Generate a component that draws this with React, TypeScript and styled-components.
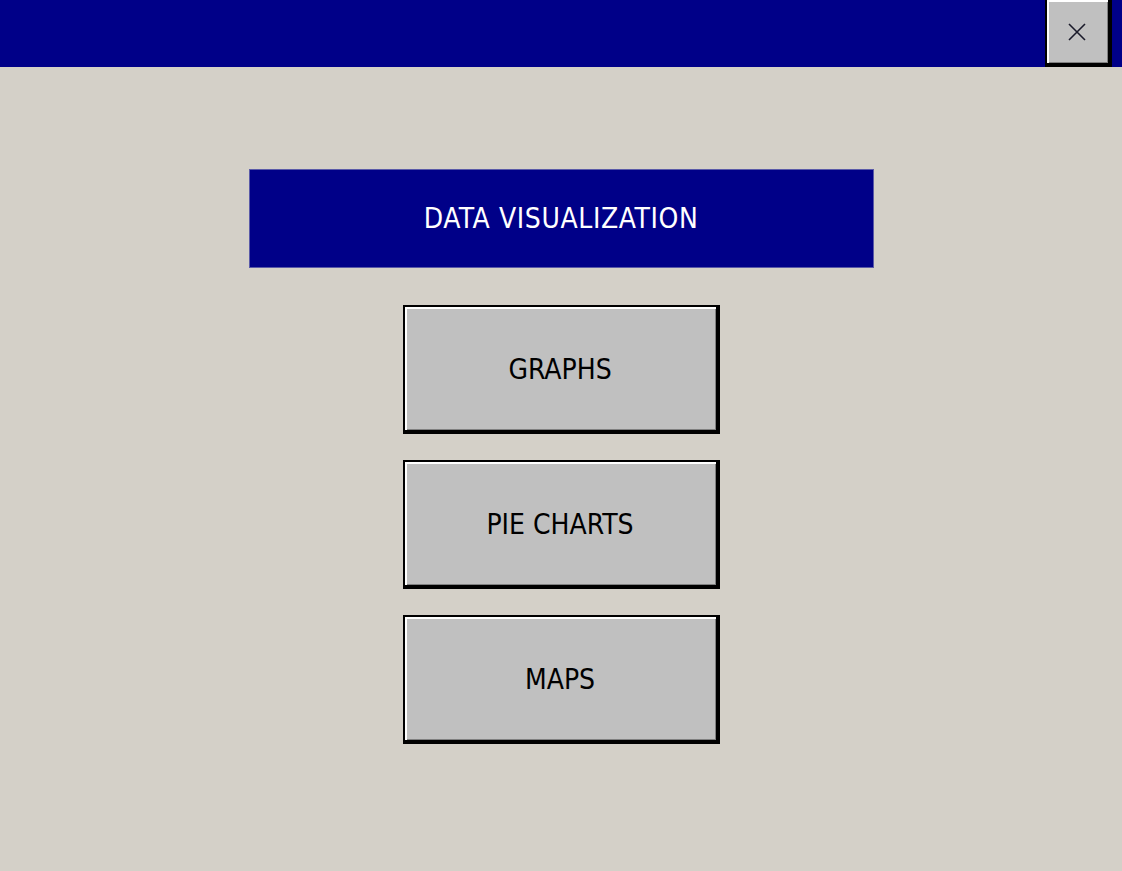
import React from "react";
import styled, { createGlobalStyle } from "styled-components";

const GlobalStyle = createGlobalStyle`
  html, body {
    margin: 0;
    padding: 0;
    background: #d4d0c8;
  }
  body {
    font-family: "DejaVu Sans Condensed", "DejaVu Sans", sans-serif;
    font-stretch: condensed;
  }
`;

const Screen = styled.div`
  width: 1122px;
  height: 871px;
  background: #d4d0c8;
  display: flex;
  flex-direction: column;
  overflow: hidden;
`;

const TitleBar = styled.div`
  height: 67px;
  background: #000088;
  display: flex;
  justify-content: flex-end;
  padding-right: 10px;
  flex-shrink: 0;
`;

const bevel = `
  background: #c0c0c0;
  border-style: solid;
  border-color: #000;
  border-width: 2px 4px 4px 2px;
  box-shadow: inset 2px 2px 0 #ffffff, inset -1px -1px 0 #808080;
  box-sizing: border-box;
`;

const CloseButton = styled.button`
  ${bevel}
  width: 67px;
  height: 67px;
  border-top-width: 0;
  padding: 0 2px 0 0;
  display: flex;
  align-items: center;
  justify-content: center;
  cursor: pointer;
`;

const Content = styled.main`
  display: flex;
  flex-direction: column;
  align-items: center;
  padding-top: 102px;
`;

const Banner = styled.div`
  width: 625px;
  height: 99px;
  box-sizing: border-box;
  background: #000088;
  border: 1px solid #5a5aa8;
  color: #ffffff;
  font-size: 28px;
  letter-spacing: 0.6px;
  display: flex;
  align-items: center;
  justify-content: center;
  margin-bottom: 37px;
`;

const MenuList = styled.nav`
  display: flex;
  flex-direction: column;
  gap: 26px;
`;

const MenuButton = styled.button`
  ${bevel}
  width: 317px;
  height: 129px;
  font-family: "DejaVu Sans Condensed", "DejaVu Sans", sans-serif;
  font-stretch: condensed;
  font-size: 28px;
  color: #000;
  padding: 2px 0 0;
  cursor: pointer;
`;

const items = ["GRAPHS", "PIE CHARTS", "MAPS"];

function App() {
  return (
    <Screen>
      <GlobalStyle />
      <TitleBar>
        <CloseButton aria-label="Close">
          <svg width="20" height="20" viewBox="0 0 20 20">
            <path d="M2 2 L18 18 M18 2 L2 18" stroke="#1a1a2a" strokeWidth="1.6" fill="none" />
          </svg>
        </CloseButton>
      </TitleBar>
      <Content>
        <Banner>DATA VISUALIZATION</Banner>
        <MenuList>
          {items.map((label) => (
            <MenuButton key={label}>{label}</MenuButton>
          ))}
        </MenuList>
      </Content>
    </Screen>
  );
}

export default App;
